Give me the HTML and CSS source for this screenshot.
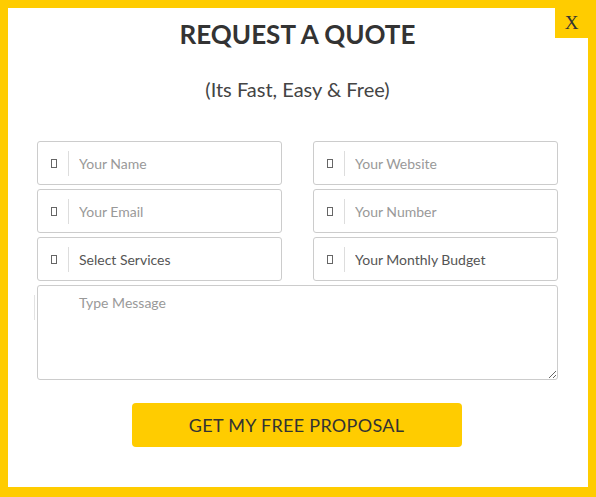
FILE: index.html
```html
<!DOCTYPE html>
<html lang="en">
<head>
    <meta charset="UTF-8">
    <title>Request a Quote</title>
    <link rel="stylesheet" href="styles.css">
</head>
<body>
<div class="popup">
    <a class="close" href="#">X</a>
    <h2 class="title">REQUEST A QUOTE</h2>
    <p class="subtitle">(Its Fast, Easy &amp; Free)</p>
    <form class="quote-form">
        <div class="fields">
            <label class="field"><span class="icon"><i></i></span><input type="text" placeholder="Your Name"></label>
            <label class="field"><span class="icon"><i></i></span><input type="text" placeholder="Your Website"></label>
            <label class="field"><span class="icon"><i></i></span><input type="text" placeholder="Your Email"></label>
            <label class="field"><span class="icon"><i></i></span><input type="text" placeholder="Your Number"></label>
            <label class="field"><span class="icon"><i></i></span>
                <select><option>Select Services</option></select></label>
            <label class="field"><span class="icon"><i></i></span>
                <select><option>Your Monthly Budget</option></select></label>
            <div class="message"><textarea placeholder="Type Message"></textarea></div>
        </div>
        <div class="actions">
            <button type="button" class="submit">GET MY FREE PROPOSAL</button>
        </div>
    </form>
</div>
</body>
</html>
```

FILE: styles.css
```css
*{
    margin: 0;
    padding: 0;
    box-sizing: border-box;
}
body{
    background: #ffcc00;
    padding: 8px;
    font-family: Lato, "Liberation Sans", sans-serif;
}
.popup{
    width: 580px;
    height: 479px;
    background: #fff;
    position: relative;
    padding: 0 30px 0 29px;
}
.close{
    position: absolute;
    top: 0;
    right: 0;
    width: 33px;
    height: 30px;
    background: #ffcc00;
    color: #333;
    text-decoration: none;
    font-family: "Liberation Serif", serif;
    font-size: 19px;
    line-height: 30px;
    text-align: center;
}
.title{
    text-align: center;
    font-size: 26px;
    font-weight: bold;
    color: #333;
    padding-top: 11px;
    line-height: 30px;
}
.subtitle{
    text-align: center;
    font-size: 20px;
    color: #444;
    margin-top: 28px;
    line-height: 24px;
}
.quote-form{
    margin-top: 40px;
}
.fields{
    display: grid;
    grid-template-columns: 245px 245px;
    column-gap: 31px;
    row-gap: 4px;
}
.field{
    height: 44px;
    border: 1px solid #ccc;
    border-radius: 3px;
    display: flex;
    align-items: center;
}
.icon{
    width: 31px;
    height: 25px;
    border-right: 1px solid #ddd;
    display: flex;
    align-items: center;
    justify-content: center;
    padding-left: 2px;
}
.icon i{
    width: 6px;
    height: 9px;
    border: 1px solid #666;
}
.field input,
.field select{
    flex: 1;
    border: none;
    outline: none;
    background: transparent;
    font-family: inherit;
    font-size: 14px;
    color: #555;
    padding-left: 10px;
    height: 40px;
    appearance: none;
    -webkit-appearance: none;
}
.field input::placeholder{
    color: #999;
}
.message{
    grid-column: 1 / 3;
    position: relative;
}
.message::before{
    content: "";
    position: absolute;
    left: -3px;
    top: 10px;
    height: 25px;
    border-left: 1px solid #e2e2e2;
}
.message textarea{
    display: block;
    width: 100%;
    height: 95px;
    border: 1px solid #ccc;
    border-radius: 3px;
    font-family: inherit;
    font-size: 14px;
    padding: 8px 10px 0 41px;
    color: #555;
    outline: none;
}
.message textarea::placeholder{
    color: #999;
}
.actions{
    text-align: center;
    margin-top: 23px;
}
.submit{
    width: 330px;
    height: 44px;
    background: #ffcc00;
    border: none;
    border-radius: 4px;
    font-family: inherit;
    font-size: 18px;
    letter-spacing: 0.3px;
    color: #333;
    margin-left: -2px;
}
```
